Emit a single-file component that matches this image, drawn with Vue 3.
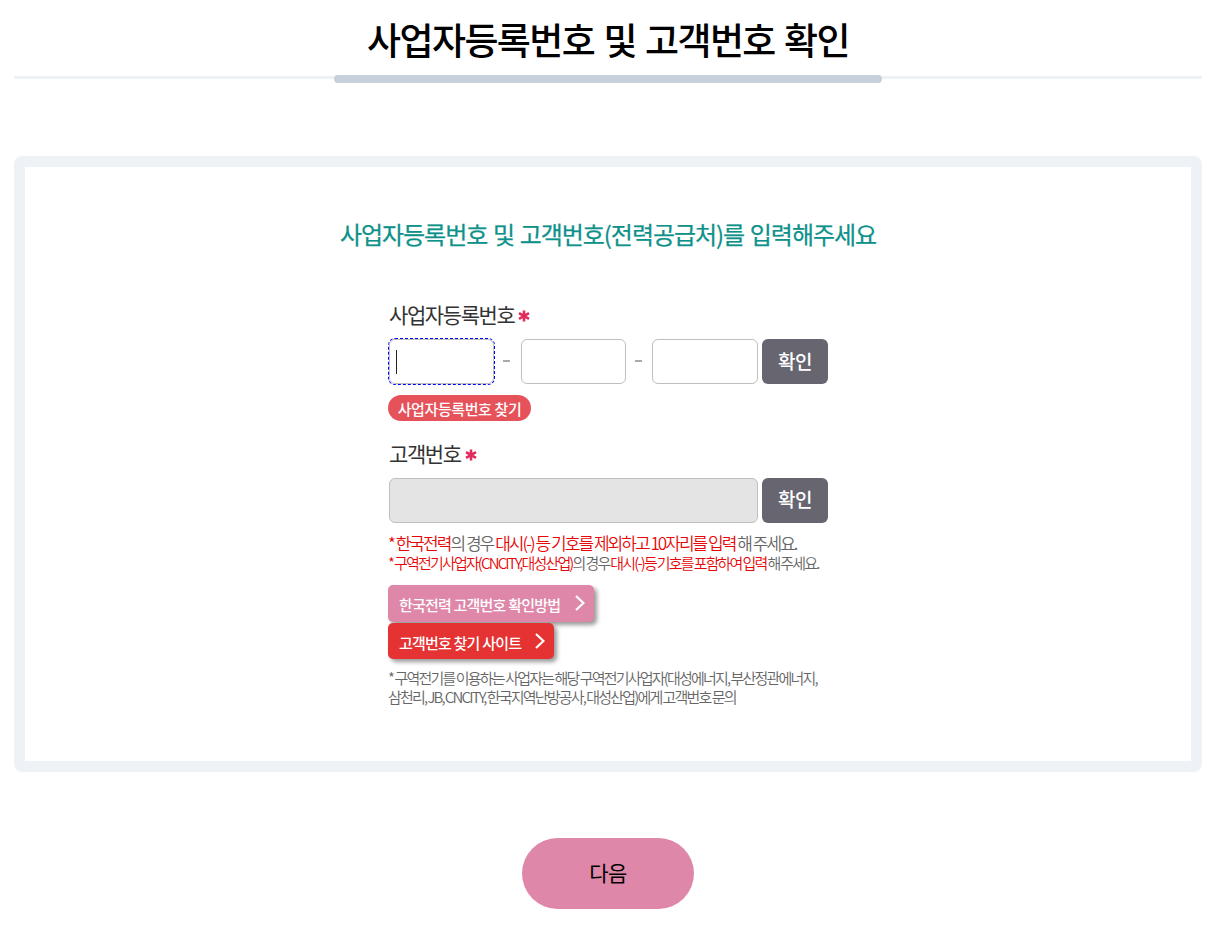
<template>
  <div class="page">
    <header class="page-title">
      <h1>사업자등록번호 및 고객번호 확인</h1>
    </header>

    <section class="panel">
      <h2>사업자등록번호 및 고객번호(전력공급처)를 입력해주세요</h2>

      <div class="form">
        <label class="label">사업자등록번호 <RequiredMark /></label>
        <div class="row">
          <div class="field short focused">
            <input v-model="bizNo[0]" maxlength="3" />
            <span class="caret"></span>
          </div>
          <span class="dash wide"></span>
          <div class="field short"><input v-model="bizNo[1]" maxlength="2" /></div>
          <span class="dash"></span>
          <div class="field"><input v-model="bizNo[2]" maxlength="5" /></div>
          <button class="confirm" type="button">확인</button>
        </div>
        <a class="pill"><span>사업자등록번호 찾기</span></a>

        <label class="label second">고객번호 <RequiredMark /></label>
        <div class="row">
          <div class="field disabled"><input v-model="customerNo" disabled /></div>
          <button class="confirm up" type="button">확인</button>
        </div>

        <p class="note first"><em>* 한국전력</em>의 경우 <em>대시(-) 등 기호를 제외하고 10자리를 입력</em> 해 주세요.</p>
        <p class="note small"><em>* 구역전기사업자(CNCITY,대성산업)</em>의 경우 <em>대시(-)등 기호를 포함하여 입력</em> 해 주세요.</p>

        <div class="links">
          <a v-for="link in links" :key="link.text" :class="['link', link.color]">
            <span>{{ link.text }}</span>
            <svg width="10" height="16" viewBox="0 0 10 16">
              <path d="M1 1 L8.5 8 L1 15" fill="none" stroke="#fff" stroke-width="2.2" />
            </svg>
          </a>
        </div>

        <p class="note help">
          * 구역전기를 이용하는 사업자는 해당 구역전기사업자(대성에너지, 부산정관에너지,<br />
          <span>삼천리, JB, CNCITY, 한국지역난방공사, 대성산업)에게 고객번호 문의</span>
        </p>
      </div>
    </section>

    <button class="next" type="button">다음</button>
  </div>
</template>

<script setup>
import { ref, h } from 'vue'

const bizNo = ref(['', '', ''])
const customerNo = ref('')

const links = [
  { text: '한국전력 고객번호 확인방법', color: 'pink' },
  { text: '고객번호 찾기 사이트', color: 'red' }
]

const RequiredMark = () =>
  h('svg', { width: 12, height: 12, viewBox: '0 0 12 12' }, [
    h('path', { d: 'M6 0.5V11.5M1 3.2L11 8.8M11 3.2L1 8.8', stroke: '#e02b5c', 'stroke-width': 2.6 })
  ])
</script>

<style>
body {
  margin: 0;
  background: #fff;
}
</style>

<style scoped>
.page {
  box-sizing: border-box;
  width: 1216px;
  height: 933px;
  padding: 0 14px;
  display: flex;
  flex-direction: column;
  align-items: center;
  font-family: 'Noto Sans CJK KR', sans-serif;
  color: #000;
  overflow: hidden;
}

h1,
h2,
p {
  margin: 0;
  white-space: nowrap;
}

.page-title {
  position: relative;
  box-sizing: border-box;
  width: 100%;
  height: 79px;
  flex: none;
  border-bottom: 3px solid #eef2f7;
  text-align: center;
}

.page-title::after {
  content: '';
  position: absolute;
  left: 320px;
  top: 75px;
  width: 548px;
  height: 8px;
  border-radius: 4px;
  background: #c8d0dc;
}

h1 {
  padding-top: 11px;
  font-size: 37px;
  line-height: 56px;
  font-weight: 500;
  letter-spacing: -1.6px;
  word-spacing: 2.5px;
}

.panel {
  box-sizing: border-box;
  width: 100%;
  height: 616px;
  flex: none;
  margin-top: 77px;
  border: 11px solid #eef2f7;
  border-radius: 8px;
  text-align: center;
}

h2 {
  margin-top: 49px;
  font-size: 24px;
  line-height: 36px;
  font-weight: 400;
  letter-spacing: -1.05px;
  word-spacing: 1.4px;
  color: #0d918a;
  -webkit-text-stroke: 0.25px #0d918a;
}

.form {
  display: flex;
  flex-direction: column;
  align-items: flex-start;
  width: 440px;
  margin: 46px auto 0;
  text-align: left;
}

.label {
  display: flex;
  align-items: center;
  gap: 4px;
  height: 32px;
  margin-bottom: 9px;
  padding-left: 1px;
  font-size: 21px;
  letter-spacing: -1.4px;
  color: #333;
}

.label.second {
  margin-top: 16px;
}

.label :deep(svg) {
  margin-top: 3px;
}

.row {
  display: flex;
  align-items: center;
  width: 440px;
  height: 45px;
  padding-left: 1px;
  box-sizing: border-box;
}

.field {
  position: relative;
  box-sizing: border-box;
  flex: 1;
  height: 45px;
  border: 1px solid #bfbfbf;
  border-radius: 6px;
  background: #fff;
}

.field.short {
  flex: 0 0 105px;
}

.field input {
  box-sizing: border-box;
  width: 100%;
  height: 100%;
  padding: 0 7px;
  border: 0;
  outline: 0;
  background: transparent;
  font-size: 18px;
}

.field.focused {
  outline: 1px dashed #0000ff;
}

.field.disabled {
  background: #e4e4e4;
}

.caret {
  position: absolute;
  left: 6px;
  top: 10px;
  width: 1px;
  height: 24px;
  background: #222;
}

.dash {
  width: 7px;
  height: 2px;
  margin: 0 10px 2px 9px;
  background: #aaa;
}

.dash.wide {
  margin-right: 11px;
}

.confirm {
  width: 66px;
  height: 45px;
  margin-left: 4px;
  padding: 0 0 2px;
  border: 0;
  border-radius: 6px;
  background: #666570;
  color: #fff;
  font-family: inherit;
  font-size: 19px;
  font-weight: 500;
  letter-spacing: -0.5px;
}

.confirm.up {
  padding-bottom: 5px;
}

.pill {
  display: flex;
  align-items: center;
  justify-content: center;
  width: 143px;
  height: 26px;
  margin-top: 11px;
  border-radius: 13px;
  background: #e5525a;
  color: #fff;
  font-size: 15px;
  font-weight: 500;
  letter-spacing: -0.4px;
  white-space: nowrap;
}

.note {
  color: #666;
  font-weight: 350;
}

.note em {
  font-style: normal;
  color: #e60808;
}

.note.first {
  margin-top: 9px;
  font-size: 17px;
  line-height: 22px;
  letter-spacing: -1.96px;
}

.note.small {
  font-size: 15px;
  line-height: 18px;
  letter-spacing: -1.82px;
  word-spacing: -0.6px;
}

.links {
  display: flex;
  flex-direction: column;
  align-items: flex-start;
  gap: 1px;
  margin-top: 13px;
}

.link {
  display: flex;
  align-items: center;
  justify-content: space-between;
  box-sizing: border-box;
  height: 37px;
  padding: 0 9px 0 11px;
  border-radius: 5px;
  box-shadow: 3px 3px 4px rgba(0, 0, 0, 0.4);
  color: #fff;
  font-size: 15px;
  font-weight: 500;
  letter-spacing: -0.8px;
  white-space: nowrap;
}

.link span {
  padding-top: 1px;
}

.link svg {
  margin-bottom: 1px;
}

.link.pink {
  width: 206px;
  background: #de87a9;
}

.link.red {
  width: 166px;
  height: 36px;
  background: #e53232;
}

.link.red span {
  padding-top: 3px;
}

.note.help {
  margin-top: 9px;
  font-size: 15px;
  line-height: 19px;
  letter-spacing: -1.8px;
  word-spacing: -0.2px;
}

.note.help span {
  letter-spacing: -1.78px;
  word-spacing: -0.5px;
}

.next {
  width: 172px;
  height: 71px;
  flex: none;
  margin-top: 66px;
  padding: 0 0 4px;
  border: 0;
  border-radius: 36px;
  background: #de87a9;
  color: #000;
  font-family: inherit;
  font-size: 21px;
  letter-spacing: -0.5px;
}
</style>
